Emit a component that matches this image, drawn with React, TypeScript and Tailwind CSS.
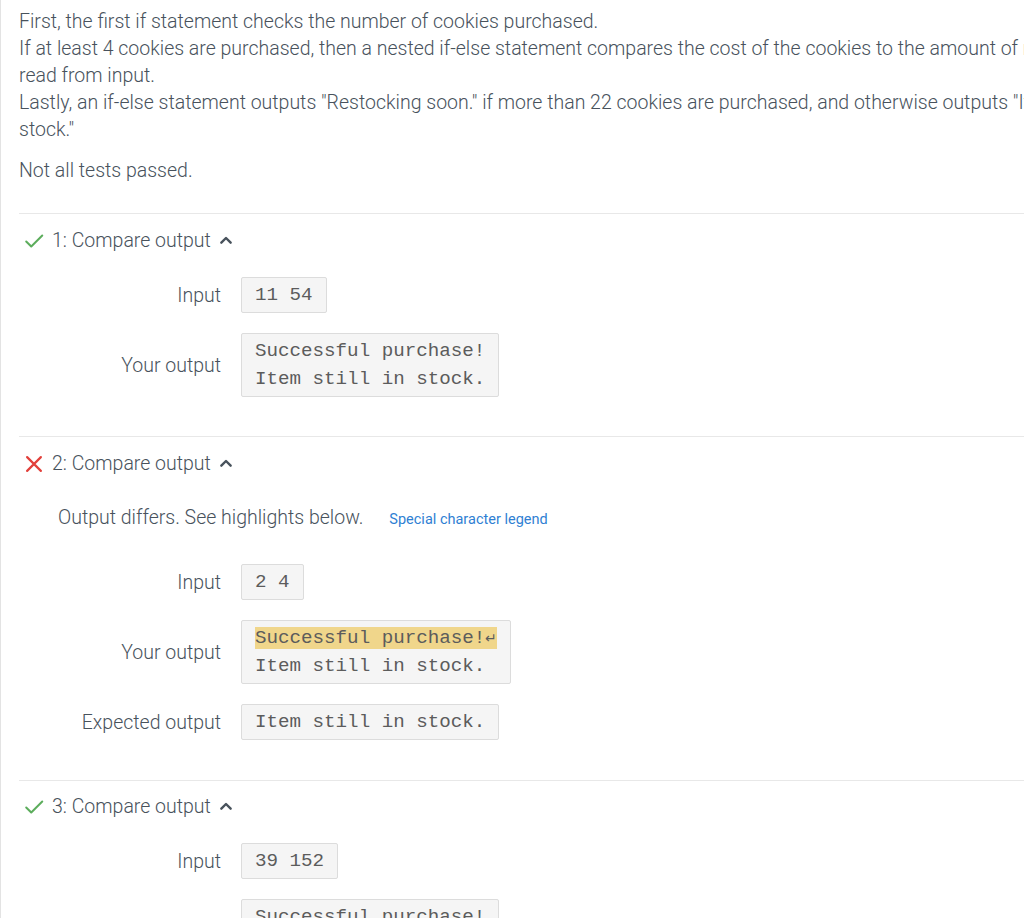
const TEXT = 'text-[#48525c]';

function CheckIcon() {
  return (
    <svg className="w-[22px] h-[22px]" viewBox="0 0 24 24" fill="none" stroke="#5cad5c" strokeWidth={2.2} strokeLinecap="round" strokeLinejoin="round">
      <path d="M3.5 12.5l5.5 5.5L21 6" />
    </svg>
  );
}

function CrossIcon() {
  return (
    <svg className="w-[22px] h-[22px]" viewBox="0 0 24 24" fill="none" stroke="#e2403b" strokeWidth={2.4} strokeLinecap="round">
      <path d="M4.5 4.5l15 15M19.5 4.5l-15 15" />
    </svg>
  );
}

function ChevronUp() {
  return (
    <svg className="w-[16px] h-[16px] -mt-[2px]" viewBox="0 0 24 24" fill="none" stroke="#48525c" strokeWidth={3.6} strokeLinecap="round" strokeLinejoin="round">
      <path d="M5 16l7-7 7 7" />
    </svg>
  );
}

function Box({ children }: { children: React.ReactNode }) {
  return (
    <div className="justify-self-start bg-[#f5f5f5] border border-[#dcdcdc] rounded-[2px] px-[13px] py-[3px] font-['Liberation_Mono',monospace] text-[19.2px] leading-[28px] text-[#5c5c5c] whitespace-pre">
      {children}
    </div>
  );
}

function Row({ label, children }: { label: string; children: React.ReactNode }) {
  return (
    <>
      <div className={`text-right ${TEXT} self-center`}>{label}</div>
      <Box>{children}</Box>
    </>
  );
}

function Header({ n, pass }: { n: number; pass: boolean }) {
  return (
    <div className="flex items-center h-[27px]">
      <span className="ml-[4px] mr-[7px] flex items-center">{pass ? <CheckIcon /> : <CrossIcon />}</span>
      <span className={TEXT}>{n}: Compare output</span>
      <span className="ml-[7px] flex items-center"><ChevronUp /></span>
    </div>
  );
}

export default function App() {
  return (
    <div className="w-[1024px] h-[918px] overflow-hidden bg-white font-['Roboto',sans-serif] font-light text-[19.5px] leading-[27px]">
      <div className="w-[1180px] h-full border-l border-[#e3e3e3] pl-[18px]">
        <div className={`pt-[8px] whitespace-nowrap ${TEXT}`}>
          <p>First, the first if statement checks the number of cookies purchased.</p>
          <p>
            If at least 4 cookies are purchased, then a nested if-else statement compares the cost of the cookies to the amount of money
            <br />
            read from input.
          </p>
          <p>
            Lastly, an if-else statement outputs "Restocking soon." if more than 22 cookies are purchased, and otherwise outputs "Item still in
            <br />
            stock."
          </p>
          <p className="mt-[14px]">Not all tests passed.</p>
        </div>

        <div className="mt-[29px] border-t border-[#e8e8e8] pt-[13px] pb-[39px]">
          <Header n={1} pass />
          <div className="mt-[23px] grid grid-cols-[202px_auto] gap-x-[20px] gap-y-[20px]">
            <Row label="Input">11 54</Row>
            <Row label="Your output">{'Successful purchase!\nItem still in stock.'}</Row>
          </div>
        </div>

        <div className="border-t border-[#e8e8e8] pt-[13px] pb-[40px]">
          <Header n={2} pass={false} />
          <div className="mt-[27px] pl-[39px] flex items-baseline">
            <span className={TEXT}>Output differs. See highlights below.</span>
            <span className="ml-[26px] text-[14.5px] font-normal text-[#2f7fd3]">Special character legend</span>
          </div>
          <div className="mt-[31px] grid grid-cols-[202px_auto] gap-x-[20px] gap-y-[20px]">
            <Row label="Input">2 4</Row>
            <Row label="Your output">
              <span className="bg-[#f0d68b]">Successful purchase!<span className="font-['DejaVu_Sans',sans-serif] text-[14px]">↵</span></span>
              {'\nItem still in stock.'}
            </Row>
            <Row label="Expected output">Item still in stock.</Row>
          </div>
        </div>

        <div className="border-t border-[#e8e8e8] pt-[12px] pb-[40px]">
          <Header n={3} pass />
          <div className="mt-[23px] grid grid-cols-[202px_auto] gap-x-[20px] gap-y-[20px]">
            <Row label="Input">39 152</Row>
            <Row label="Your output">{'Successful purchase!\nItem still in stock.'}</Row>
          </div>
        </div>
      </div>
    </div>
  );
}
